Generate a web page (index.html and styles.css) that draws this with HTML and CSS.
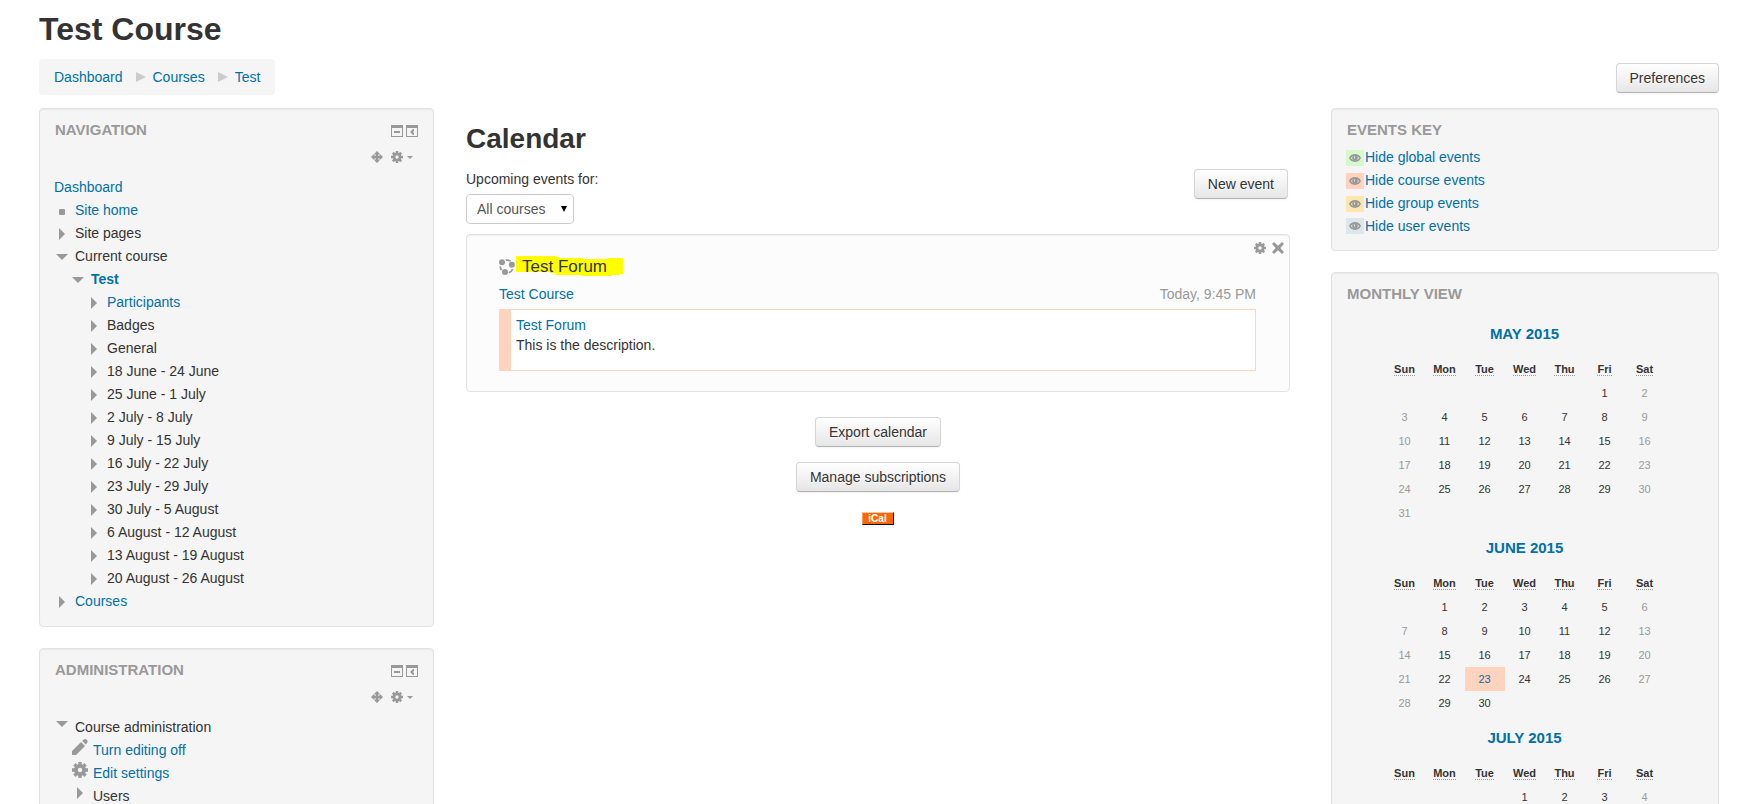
FILE: index.html
```html
<!DOCTYPE html>
<html lang="en">
<head>
  <meta charset="UTF-8">
  <title>Test: Calendar</title>
  <link rel="stylesheet" href="styles.css">
</head>
<body>

  <!-- shared icons -->
  <svg class="sprite" aria-hidden="true">
    <symbol id="i-cog" viewBox="0 0 16 16">
      <path fill-rule="evenodd" d="M6.3 0h3.4v2.2l1.1.5 1.6-1.6 2.4 2.4-1.6 1.6.5 1.2H16v3.4h-2.3l-.5 1.2 1.6 1.6-2.4 2.4-1.6-1.6-1.1.5V16H6.3v-2.2l-1.1-.5-1.6 1.6-2.4-2.4 1.6-1.6-.5-1.2H0V6.300h2.3l.5-1.2-1.6-1.6 2.4-2.4 1.6 1.6 1.1-.5zM8 5.800a2.200 2.200 0 1 0 0 4.400 2.200 2.200 0 0 0 0-4.400z"/>
    </symbol>
    <symbol id="i-move" viewBox="0 0 12 12">
      <path d="M6 0l2.500 2.500v1H7.200v1.300h1.300V3.500h1L12 6 9.500 8.500h-1V7.200H7.200v1.300h1.300v1L6 12 3.500 9.500v-1h1.300V7.200H3.500v1.300h-1L0 6l2.500-2.500h1v1.300h1.300V3.500H3.500v-1z"/>
    </symbol>
    <symbol id="i-hide" viewBox="0 0 12 12">
      <path fill-rule="evenodd" d="M0 0h12v12H0zM1 3v8h10V3zM3 6h6v2H3z"/>
    </symbol>
    <symbol id="i-dock" viewBox="0 0 12 12">
      <path fill-rule="evenodd" d="M0 0h12v12H0zM1 3v8h10V3zM4 7l3-3h1v2L7 7l1 1v2H7z"/>
    </symbol>
    <symbol id="i-right" viewBox="0 0 12 12"><path d="M3 0l6 6-6 6z"/></symbol>
    <symbol id="i-down" viewBox="0 0 12 12"><path d="M0 3h12L6 9z"/></symbol>
    <symbol id="i-item" viewBox="0 0 12 12"><rect x="3" y="4" width="6" height="6" rx="1"/></symbol>
    <symbol id="i-pencil" viewBox="0 0 16 16">
      <path d="M0 16v-4l9-9 4 4-9 9zM10.200 2l1.300-1.300c1-1 2.400-.8 3.300 0s1.200 2.300.2 3.300L13.800 5.500z"/>
    </symbol>
    <symbol id="i-eye" viewBox="0 0 12 8">
      <path fill="none" stroke="#999" stroke-width="1.600" d="M.9 4C1.800 2 3.600.9 6 .9S10.200 2 11.100 4C10.200 6 8.400 7.100 6 7.100S1.800 6 .9 4z"/>
      <path fill-rule="evenodd" d="M6 1.200a2.800 2.800 0 1 1 0 5.600 2.800 2.800 0 0 1 0-5.600zM5 2.500v2h1v-2z"/>
    </symbol>
    <symbol id="i-close" viewBox="0 0 12 12">
      <path d="M2 0l4 3.700L10 0l2 2-3.700 4L12 10l-2 2-4-3.700L2 12l-2-2 3.700-4L0 2z"/>
    </symbol>
    <symbol id="i-course" viewBox="0 0 16 16">
      <circle cx="3" cy="3.200" r="3"/><circle cx="12.800" cy="5.700" r="3"/><circle cx="6" cy="13" r="3"/>
      <path fill="none" stroke="#999" stroke-width="1.700" d="M6.800 1.200c2-.4 3.600.1 4.800 1M1.200 7.300c0 1.500.5 2.700 1.400 3.800M9.800 13.700c2-.7 3.300-2 3.900-3.800"/>
    </symbol>
  </svg>

  <header class="page-header">
    <h1>Test Course</h1>
    <div class="page-navbar">
      <nav class="breadcrumb">
        <a href="#">Dashboard</a>
        <svg class="divider" viewBox="0 0 10 10"><path d="M0 0l10 5-10 5z"/></svg>
        <a href="#">Courses</a>
        <svg class="divider" viewBox="0 0 10 10"><path d="M0 0l10 5-10 5z"/></svg>
        <a href="#">Test</a>
      </nav>
      <button class="btn" type="button">Preferences</button>
    </div>
  </header>

  <div class="page-content">

    <aside>
      <section class="block">
        <div class="block-header">
          <h2>Navigation</h2>
          <div class="block-action">
            <button class="icon-btn" type="button" aria-label="Hide Navigation block"><svg class="icon"><use href="#i-hide"/></svg></button>
            <button class="icon-btn" type="button" aria-label="Dock Navigation block"><svg class="icon"><use href="#i-dock"/></svg></button>
          </div>
        </div>
        <div class="block-commands">
          <button class="icon-btn" type="button" aria-label="Move Navigation block"><svg class="icon"><use href="#i-move"/></svg></button>
          <button class="icon-btn" type="button" aria-label="Actions"><svg class="icon"><use href="#i-cog"/></svg><span class="caret"></span></button>
        </div>
        <ul class="tree">
          <li class="root"><a href="#">Dashboard</a></li>
          <li><svg class="icon"><use href="#i-item"/></svg><a href="#">Site home</a></li>
          <li><svg class="icon"><use href="#i-right"/></svg>Site pages</li>
          <li><svg class="icon"><use href="#i-down"/></svg>Current course</li>
          <li class="depth-2"><svg class="icon"><use href="#i-down"/></svg><a class="active" href="#">Test</a></li>
          <li class="depth-3"><svg class="icon"><use href="#i-right"/></svg><a href="#">Participants</a></li>
          <li class="depth-3"><svg class="icon"><use href="#i-right"/></svg>Badges</li>
          <li class="depth-3"><svg class="icon"><use href="#i-right"/></svg>General</li>
          <li class="depth-3"><svg class="icon"><use href="#i-right"/></svg>18 June - 24 June</li>
          <li class="depth-3"><svg class="icon"><use href="#i-right"/></svg>25 June - 1 July</li>
          <li class="depth-3"><svg class="icon"><use href="#i-right"/></svg>2 July - 8 July</li>
          <li class="depth-3"><svg class="icon"><use href="#i-right"/></svg>9 July - 15 July</li>
          <li class="depth-3"><svg class="icon"><use href="#i-right"/></svg>16 July - 22 July</li>
          <li class="depth-3"><svg class="icon"><use href="#i-right"/></svg>23 July - 29 July</li>
          <li class="depth-3"><svg class="icon"><use href="#i-right"/></svg>30 July - 5 August</li>
          <li class="depth-3"><svg class="icon"><use href="#i-right"/></svg>6 August - 12 August</li>
          <li class="depth-3"><svg class="icon"><use href="#i-right"/></svg>13 August - 19 August</li>
          <li class="depth-3"><svg class="icon"><use href="#i-right"/></svg>20 August - 26 August</li>
          <li><svg class="icon"><use href="#i-right"/></svg><a href="#">Courses</a></li>
        </ul>
      </section>

      <section class="block">
        <div class="block-header">
          <h2>Administration</h2>
          <div class="block-action">
            <button class="icon-btn" type="button" aria-label="Hide Administration block"><svg class="icon"><use href="#i-hide"/></svg></button>
            <button class="icon-btn" type="button" aria-label="Dock Administration block"><svg class="icon"><use href="#i-dock"/></svg></button>
          </div>
        </div>
        <div class="block-commands">
          <button class="icon-btn" type="button" aria-label="Move Administration block"><svg class="icon"><use href="#i-move"/></svg></button>
          <button class="icon-btn" type="button" aria-label="Actions"><svg class="icon"><use href="#i-cog"/></svg><span class="caret"></span></button>
        </div>
        <ul class="tree settings">
          <li><svg class="icon"><use href="#i-down"/></svg>Course administration</li>
          <li class="leaf"><svg class="icon"><use href="#i-pencil"/></svg><a href="#">Turn editing off</a></li>
          <li class="leaf"><svg class="icon"><use href="#i-cog"/></svg><a href="#">Edit settings</a></li>
          <li class="leaf branch"><svg class="icon"><use href="#i-right"/></svg>Users</li>
        </ul>
      </section>
    </aside>

    <main>
      <h2 class="title">Calendar</h2>
      <div class="controls">
        <div class="filter">
          <label for="courseFilter">Upcoming events for:</label>
          <div class="select">
            <select id="courseFilter">
              <option>All courses</option>
            </select>
          </div>
        </div>
        <button class="btn" type="button">New event</button>
      </div>

      <article class="event">
        <div class="commands">
          <button class="icon-btn" type="button" aria-label="Edit event"><svg class="icon"><use href="#i-cog"/></svg></button>
          <button class="icon-btn" type="button" aria-label="Delete event"><svg class="icon"><use href="#i-close"/></svg></button>
        </div>
        <div class="event-body">
          <h3>
            <svg class="icon"><use href="#i-course"/></svg>
            <span class="name">
              <svg class="marker" viewBox="0 0 107 20"><path d="M0 0h39v1h5v1h23v1h25V2h15v16h-2l-1 1h-8v1H65v-1H40v-2h-6v-1H0z"/></svg>
              Test Forum
            </span>
          </h3>
          <div class="event-meta">
            <a href="#">Test Course</a>
            <span class="date">Today, 9:45 PM</span>
          </div>
          <div class="description">
            <a href="#">Test Forum</a>
            <p>This is the description.</p>
          </div>
        </div>
      </article>

      <div class="bottom">
        <button class="btn" type="button">Export calendar</button>
        <button class="btn" type="button">Manage subscriptions</button>
        <a class="ical" href="#">iCal</a>
      </div>
    </main>

    <aside>
      <section class="block">
        <div class="block-header"><h2>Events key</h2></div>
        <ul class="filters">
          <li><span class="key global"><svg><use href="#i-eye"/></svg></span><a href="#">Hide global events</a></li>
          <li><span class="key course"><svg><use href="#i-eye"/></svg></span><a href="#">Hide course events</a></li>
          <li><span class="key group"><svg><use href="#i-eye"/></svg></span><a href="#">Hide group events</a></li>
          <li><span class="key user"><svg><use href="#i-eye"/></svg></span><a href="#">Hide user events</a></li>
        </ul>
      </section>

      <section class="block">
        <div class="block-header"><h2>Monthly view</h2></div>
        <div class="months">
        <table class="minicalendar">
          <caption><a href="#">May 2015</a></caption>
          <thead>
            <tr><th><abbr title="Sunday">Sun</abbr></th><th><abbr title="Monday">Mon</abbr></th><th><abbr title="Tuesday">Tue</abbr></th><th><abbr title="Wednesday">Wed</abbr></th><th><abbr title="Thursday">Thu</abbr></th><th><abbr title="Friday">Fri</abbr></th><th><abbr title="Saturday">Sat</abbr></th></tr>
          </thead>
          <tbody>
            <tr><td></td><td></td><td></td><td></td><td></td><td>1</td><td>2</td></tr>
            <tr><td>3</td><td>4</td><td>5</td><td>6</td><td>7</td><td>8</td><td>9</td></tr>
            <tr><td>10</td><td>11</td><td>12</td><td>13</td><td>14</td><td>15</td><td>16</td></tr>
            <tr><td>17</td><td>18</td><td>19</td><td>20</td><td>21</td><td>22</td><td>23</td></tr>
            <tr><td>24</td><td>25</td><td>26</td><td>27</td><td>28</td><td>29</td><td>30</td></tr>
            <tr><td>31</td><td></td><td></td><td></td><td></td><td></td><td></td></tr>
          </tbody>
        </table>
        <table class="minicalendar">
          <caption><a href="#">June 2015</a></caption>
          <thead>
            <tr><th><abbr title="Sunday">Sun</abbr></th><th><abbr title="Monday">Mon</abbr></th><th><abbr title="Tuesday">Tue</abbr></th><th><abbr title="Wednesday">Wed</abbr></th><th><abbr title="Thursday">Thu</abbr></th><th><abbr title="Friday">Fri</abbr></th><th><abbr title="Saturday">Sat</abbr></th></tr>
          </thead>
          <tbody>
            <tr><td></td><td>1</td><td>2</td><td>3</td><td>4</td><td>5</td><td>6</td></tr>
            <tr><td>7</td><td>8</td><td>9</td><td>10</td><td>11</td><td>12</td><td>13</td></tr>
            <tr><td>14</td><td>15</td><td>16</td><td>17</td><td>18</td><td>19</td><td>20</td></tr>
            <tr><td>21</td><td>22</td><td class="has-event"><a href="#">23</a></td><td>24</td><td>25</td><td>26</td><td>27</td></tr>
            <tr><td>28</td><td>29</td><td>30</td><td></td><td></td><td></td><td></td></tr>
          </tbody>
        </table>
        <table class="minicalendar">
          <caption><a href="#">July 2015</a></caption>
          <thead>
            <tr><th><abbr title="Sunday">Sun</abbr></th><th><abbr title="Monday">Mon</abbr></th><th><abbr title="Tuesday">Tue</abbr></th><th><abbr title="Wednesday">Wed</abbr></th><th><abbr title="Thursday">Thu</abbr></th><th><abbr title="Friday">Fri</abbr></th><th><abbr title="Saturday">Sat</abbr></th></tr>
          </thead>
          <tbody>
            <tr><td></td><td></td><td></td><td>1</td><td>2</td><td>3</td><td>4</td></tr>
          </tbody>
        </table>
        </div>
      </section>
    </aside>

  </div>
</body>
</html>
```
FILE: styles.css
```css
* {
  box-sizing: border-box;
}
body {
  margin: 0;
  padding: 9px 22px 0 39px;
  font: 14px/20px "Liberation Sans", Arial, sans-serif;
  color: #333;
  background: #fff;
}
a {
  color: #0070a8;
  text-decoration: none;
}
a:hover {
  text-decoration: underline;
}
h1, h2, h3, p, ul {
  margin: 0;
  padding: 0;
}
ul {
  list-style: none;
}
.sprite {
  display: none;
}
.icon {
  display: block;
  flex: none;
  width: 12px;
  height: 12px;
  fill: #999;
}
.icon-btn {
  display: flex;
  align-items: center;
  padding: 0;
  border: 0;
  background: none;
  cursor: pointer;
}
.btn {
  height: 30px;
  padding: 0 13px;
  font: inherit;
  color: #333;
  text-shadow: 0 1px 1px rgba(255, 255, 255, .75);
  background: linear-gradient(#fff, #e6e6e6);
  border: 1px solid #d5d5d5;
  border-bottom-color: #b3b3b3;
  border-radius: 4px;
  box-shadow: 0 1px 2px rgba(0, 0, 0, .05);
  cursor: pointer;
}

/* header */
h1 {
  font-size: 32px;
  line-height: 40px;
}
.page-navbar {
  display: flex;
  justify-content: space-between;
  align-items: flex-end;
  margin: 10px 0 13px;
}
.breadcrumb {
  display: flex;
  align-items: center;
  padding: 8px 15px;
  background: #f5f5f5;
  border-radius: 4px;
}
.page-navbar .btn {
  margin-bottom: 2px;
}
.divider {
  width: 10px;
  height: 10px;
  margin: 0 7px 0 13px;
  fill: #ccc;
}

.page-content {
  display: grid;
  grid-template-columns: 395fr 833fr 388fr;
  column-gap: 32px;
  align-items: start;
}

/* blocks */
.block {
  padding: 11px 15px 13px 14px;
  margin-bottom: 21px;
  background: #f5f5f5;
  border: 1px solid #e3e3e3;
  border-radius: 4px;
  box-shadow: inset 0 1px 1px rgba(0, 0, 0, .05);
}
.block-header {
  display: flex;
  justify-content: space-between;
  align-items: center;
}
.block h2 {
  padding-left: 1px;
  font-size: 15px;
  line-height: 20px;
  color: #999;
  text-transform: uppercase;
}
.block-action {
  display: flex;
  gap: 3px;
  padding-top: 2px;
}
.block-commands {
  display: flex;
  justify-content: flex-end;
  align-items: center;
  gap: 8px;
  height: 20px;
  margin: 7px 5px 9px 0;
}
.caret {
  margin-left: 4px;
  border: solid transparent;
  border-width: 3px 3px 0;
  border-top-color: #999;
}

.tree li {
  display: flex;
  align-items: center;
  gap: 7px;
  padding-left: 2px;
  line-height: 23px;
}
.tree .root {
  padding-left: 0;
}
.tree .depth-2 {
  padding-left: 18px;
}
.tree .depth-3 {
  padding-left: 34px;
}
.tree .active {
  font-weight: bold;
}
.settings li {
  align-items: flex-start;
}
.settings .icon {
  height: 16px;
}
.settings .leaf {
  gap: 5px;
  padding-left: 18px;
}
.settings .leaf .icon {
  width: 16px;
}
.settings .branch .icon {
  padding: 2px;
}

/* calendar */
main {
  padding-right: 9px;
}
.title {
  margin: 11px 0 10px;
  font-size: 28px;
  line-height: 40px;
}
.controls {
  display: flex;
  justify-content: space-between;
  align-items: flex-start;
  padding-right: 2px;
  margin-bottom: 10px;
}
.controls label {
  display: block;
  margin-bottom: 5px;
}
.select {
  position: relative;
  width: 108px;
}
.select::after {
  content: "";
  position: absolute;
  top: 12px;
  right: 7px;
  border: solid transparent;
  border-width: 6px 3px 0;
  border-top-color: #000;
  pointer-events: none;
}
select {
  display: block;
  width: 100%;
  height: 30px;
  padding: 0 10px;
  font: inherit;
  color: #555;
  background: #fff;
  border: 1px solid #ccc;
  border-radius: 4px;
  appearance: none;
}
.event {
  padding: 7px 5px 20px 32px;
  background: #fcfcfc;
  border: 1px solid #e3e3e3;
  border-radius: 4px;
  box-shadow: inset 0 1px 1px rgba(0, 0, 0, .05);
}
.commands {
  display: flex;
  justify-content: flex-end;
  gap: 6px;
}
.event-body {
  margin-right: 28px;
}
.event h3 {
  display: flex;
  align-items: center;
  padding-top: 1px;
  font-size: 17px;
  font-weight: normal;
  line-height: 24px;
}
.event h3 .icon {
  width: 16px;
  height: 16px;
}
.name {
  position: relative;
  z-index: 0;
  padding-left: 7px;
}
.marker {
  position: absolute;
  z-index: -1;
  top: 1px;
  left: 1px;
  width: 107px;
  height: 20px;
  fill: #ff0;
}
.event-meta {
  display: flex;
  justify-content: space-between;
  margin: 5px 0;
}
.date {
  color: #999;
}
.description {
  padding: 5px 5px 15px;
  background: #fff;
  border: 1px solid #ffd3bd;
  border-left-width: 12px;
}
.bottom {
  display: flex;
  flex-direction: column;
  align-items: center;
  gap: 15px;
  padding-top: 25px;
}
.ical {
  margin-top: 5px;
  padding: 0 6px 0 5px;
  font-size: 10px;
  font-weight: bold;
  line-height: 11px;
  color: #fff;
  background: #f60;
  border: 1px solid;
  border-color: #ffc8a4 #03113a #03113a #ff9a57;
}

/* events key */
.filters {
  padding-top: 6px;
}
.filters li {
  display: flex;
  align-items: center;
  gap: 1px;
  line-height: 23px;
}
.filters li:last-child {
  line-height: 22px;
}
.key {
  display: flex;
  align-items: center;
  justify-content: center;
  width: 18px;
  height: 16px;
}
.key svg {
  width: 12px;
  height: 8px;
  fill: #999;
}
.global { background: #d6f8cd; }
.course { background: #ffd3bd; }
.group  { background: #fee7ae; }
.user   { background: #dce7ec; }

/* monthly view */
.months {
  padding-top: 7px;
}
.minicalendar {
  margin: 0 auto;
  border-collapse: collapse;
  font-size: 11px;
  line-height: 20px;
  text-align: center;
}
.minicalendar caption {
  padding: 13px 0;
  font-size: 15px;
  font-weight: bold;
  text-transform: uppercase;
}
.minicalendar th,
.minicalendar td {
  width: 40px;
  height: 24px;
  padding: 0;
}
.minicalendar td:first-child,
.minicalendar td:last-child {
  color: #999;
}
.minicalendar abbr {
  text-decoration: none;
  border-bottom: 1px dotted #999;
}
.minicalendar .has-event {
  background: #ffd3bd;
}
```
